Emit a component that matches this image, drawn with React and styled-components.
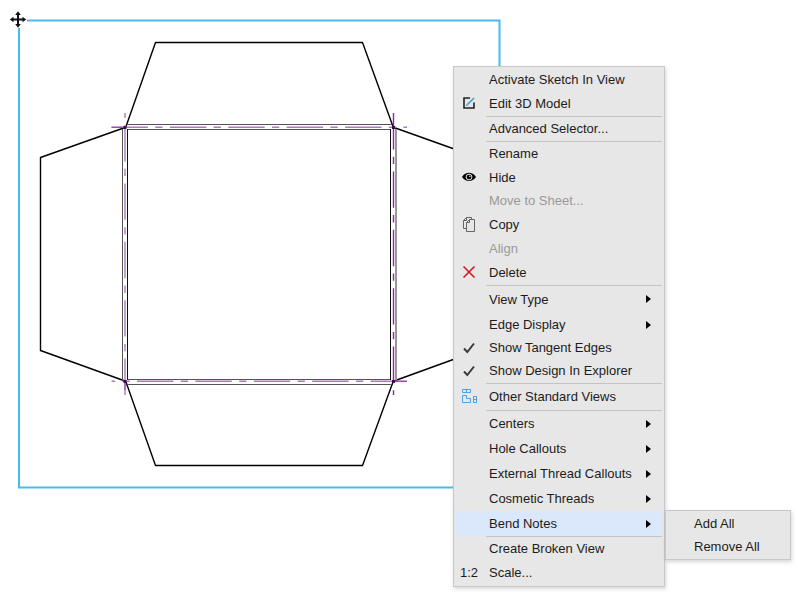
import React from "react";
import styled, { createGlobalStyle } from "styled-components";

const GlobalStyle = createGlobalStyle`
  * {
    box-sizing: border-box;
  }
  body {
    margin: 0;
    background: #fff;
    color: #1c1c1c;
    font-family: "Liberation Sans", Arial, sans-serif;
    font-size: 13px;
  }
`;

const Sheet = styled.main`
  position: relative;
  min-height: 100vh;
  overflow: hidden;
`;

const Drawing = styled.svg`
  display: block;
  width: 510px;
  height: 500px;
`;

const Menu = styled.ul`
  position: absolute;
  left: 453px;
  top: 66px;
  width: 212px;
  margin: 0;
  padding: 1px 2px;
  list-style: none;
  background: #e7e7e7;
  border: 1px solid #c8c8c8;
  box-shadow: 1px 2px 4px rgba(0, 0, 0, 0.16);
`;

const Submenu = styled(Menu)`
  left: calc(100% + 3px);
  top: -1px;
  width: 126px;
`;

const Item = styled.li`
  position: relative;
`;

const Separator = styled.li`
  height: 1px;
  margin-left: 30px;
  background: #c4c4c4;
`;

const MenuButton = styled.button`
  display: flex;
  align-items: center;
  gap: 8px;
  width: 100%;
  height: ${(props) => props.$height || 24}px;
  padding: 0 11px ${(props) => (props.$submenu ? 0 : 2)}px 1px;
  border: 0;
  background: ${(props) => (props.$active ? "#dbe7fb" : "transparent")};
  color: inherit;
  font: inherit;
  text-align: left;
  white-space: nowrap;

  &:hover:enabled {
    background: #dbe7fb;
  }
  &:disabled {
    color: #9a9a9a;
  }
`;

const SubmenuButton = styled(MenuButton)`
  height: 23px;
  padding: 0 0 0 26px;
`;

const IconSlot = styled.span`
  display: flex;
  flex: none;
  align-items: center;
  justify-content: center;
  width: 24px;
`;

const Label = styled.span`
  flex: 1;
`;

const Arrow = styled.span`
  border: 4px solid transparent;
  border-left: 5px solid #000;
  border-right: 0;
`;

const EditIcon = () => (
  <svg width="14" height="14" viewBox="0 0 14 14" fill="none">
    <path d="M8 2H2v10h10V6.500" stroke="#222" strokeWidth="1.600" />
    <path d="M5.500 8.500 12 2" stroke="#3d9be0" strokeWidth="1.600" />
    <path d="m4 10 .6-2.200L6.200 9.400z" fill="#3d9be0" />
  </svg>
);

const EyeIcon = () => (
  <svg width="14" height="10" viewBox="0 0 14 10">
    <path d="M0 5C3.500-.6 10.500-.6 14 5 10.500 10.200 3.500 10.200 0 5z" fill="#000" />
    <circle cx="7" cy="5" r="2.900" fill="none" stroke="#e7e7e7" strokeWidth="1" />
    <circle cx="7.800" cy="4.200" r=".8" fill="#e7e7e7" />
  </svg>
);

const CopyIcon = () => (
  <svg width="14" height="16" viewBox="0 0 14 16" fill="none" stroke="#666">
    <path d="M4.500 12.500h-3v-8l3-3h5v2" />
    <path d="M1.500 4.500h3v-3" />
    <path d="M4.500 6.500l3-3h5v12h-8z" />
    <path d="M4.500 6.500h3v-3" />
  </svg>
);

const DeleteIcon = () => (
  <svg width="12" height="12" viewBox="0 0 12 12" stroke="#d2121a" strokeWidth="1.500">
    <path d="M.5.500 11.500 11.500M11.500.500.5 11.500" />
  </svg>
);

const CheckIcon = () => (
  <svg width="12" height="12" viewBox="0 0 12 12" fill="none">
    <path d="M1 6.500 4.300 10 11 1.500" stroke="#3a3a3a" strokeWidth="2" />
  </svg>
);

const ViewsIcon = () => (
  <svg width="16" height="14" viewBox="0 0 16 14" fill="none" stroke="#4f9fe6">
    <path d="M1.500.500h8v3h-8zM5.500.500v3" />
    <path d="M1.500 6.500h4v3h4v4h-8z" />
    <path d="M12.500 7.500h3v6h-3zM12.500 10.500h3" />
  </svg>
);

const items = [
  { label: "Activate Sketch In View" },
  { label: "Edit 3D Model", icon: <EditIcon /> },
  { separator: true },
  { label: "Advanced Selector..." },
  { separator: true },
  { label: "Rename" },
  { label: "Hide", icon: <EyeIcon /> },
  { label: "Move to Sheet...", disabled: true, height: 23 },
  { label: "Copy", icon: <CopyIcon /> },
  { label: "Align", disabled: true },
  { label: "Delete", icon: <DeleteIcon /> },
  { separator: true },
  { label: "View Type", arrow: true, height: 26 },
  { label: "Edge Display", arrow: true, height: 25 },
  { label: "Show Tangent Edges", icon: <CheckIcon />, checked: true, height: 23 },
  { label: "Show Design In Explorer", icon: <CheckIcon />, checked: true, height: 23 },
  { separator: true },
  { label: "Other Standard Views", icon: <ViewsIcon />, height: 26 },
  { separator: true },
  { label: "Centers", arrow: true, height: 25 },
  { label: "Hole Callouts", arrow: true, height: 25 },
  { label: "External Thread Callouts", arrow: true, height: 25 },
  { label: "Cosmetic Threads", arrow: true, height: 25 },
  { label: "Bend Notes", arrow: true, height: 25, children: ["Add All", "Remove All"] },
  { separator: true },
  { label: "Create Broken View" },
  { label: "Scale...", icon: "1:2" },
];

const FlatPattern = () => (
  <Drawing viewBox="0 0 510 500" fill="none" role="img" aria-label="Flat pattern">
    <path d="M27 20.500H499.500V487.500H19V28" stroke="#4abaf6" strokeWidth="2" />
    <g stroke="#000" strokeWidth="1.400" strokeLinejoin="round">
      <path d="M126 126.500 155.500 42.500H362.500L393 126.500" />
      <path d="M125 127.500 40.500 157.500V350.500L125 381" />
      <path d="M126 382 155.500 465.500H362.500L393 382" />
      <path d="M394 127.500 478 157.500V350.500L394 381" />
    </g>
    <g stroke="#555">
      <path d="M127 124.500H392M127 129.500H391M127 379.500H391M127 384.500H392" />
      <path d="M122.500 129V380" />
      <path d="M396 129V380" stroke="#999" strokeWidth="2" />
    </g>
    <path d="M127.500 129V380M390.500 129V380" stroke="#111" />
    {/* bend centerlines */}
    <g strokeDasharray="36.400 7.300 7.300 7.400">
      <path d="M111.500 127.300H407M407 381.300H111.500" stroke="#b077c0" strokeWidth="1.400" />
      <path d="M125 395V113" stroke="#c3a0cf" strokeWidth="2" />
      <path d="M393.500 113V395" stroke="#9a1fa8" strokeWidth="1.400" />
    </g>
    <path d="M111.500 127.300H125M394 381.300H407M125 382V390" stroke="#9a3fac" />
    <g fill="#3b0752">
      <path d="M123.500 126h3v3h-3zM392 126h3v3h-3zM123.500 380h3v3h-3zM392 380h3v3h-3z" />
    </g>
    {/* move cursor */}
    <path d="M12 19.500H24M18 13.500V25.500" stroke="#111" strokeWidth="2" />
    <path
      d="M18 11.300 20.800 15h-5.600zM18 27.700 20.800 24h-5.600zM9.800 19.500 13.500 16.700v5.600zM26.200 19.500 22.500 16.700v5.600z"
      fill="#111"
    />
  </Drawing>
);

const MenuItem = ({ item }) => (
  <Item role="none">
    <MenuButton
      type="button"
      role={item.checked ? "menuitemcheckbox" : "menuitem"}
      aria-checked={item.checked}
      aria-haspopup={item.arrow ? "menu" : undefined}
      disabled={item.disabled}
      $height={item.height}
      $submenu={item.arrow}
      $active={Boolean(item.children)}
    >
      <IconSlot aria-hidden="true">{item.icon}</IconSlot>
      <Label>{item.label}</Label>
      {item.arrow && <Arrow />}
    </MenuButton>
    {item.children && (
      <Submenu role="menu">
        {item.children.map((label) => (
          <Item key={label} role="none">
            <SubmenuButton type="button" role="menuitem">
              {label}
            </SubmenuButton>
          </Item>
        ))}
      </Submenu>
    )}
  </Item>
);

const App = () => {
  return (
    <>
      <GlobalStyle />
      <Sheet>
        <FlatPattern />
        <Menu role="menu">
          {items.map((item, index) =>
            item.separator ? (
              <Separator key={index} role="separator" />
            ) : (
              <MenuItem key={item.label} item={item} />
            )
          )}
        </Menu>
      </Sheet>
    </>
  );
};

export default App;
